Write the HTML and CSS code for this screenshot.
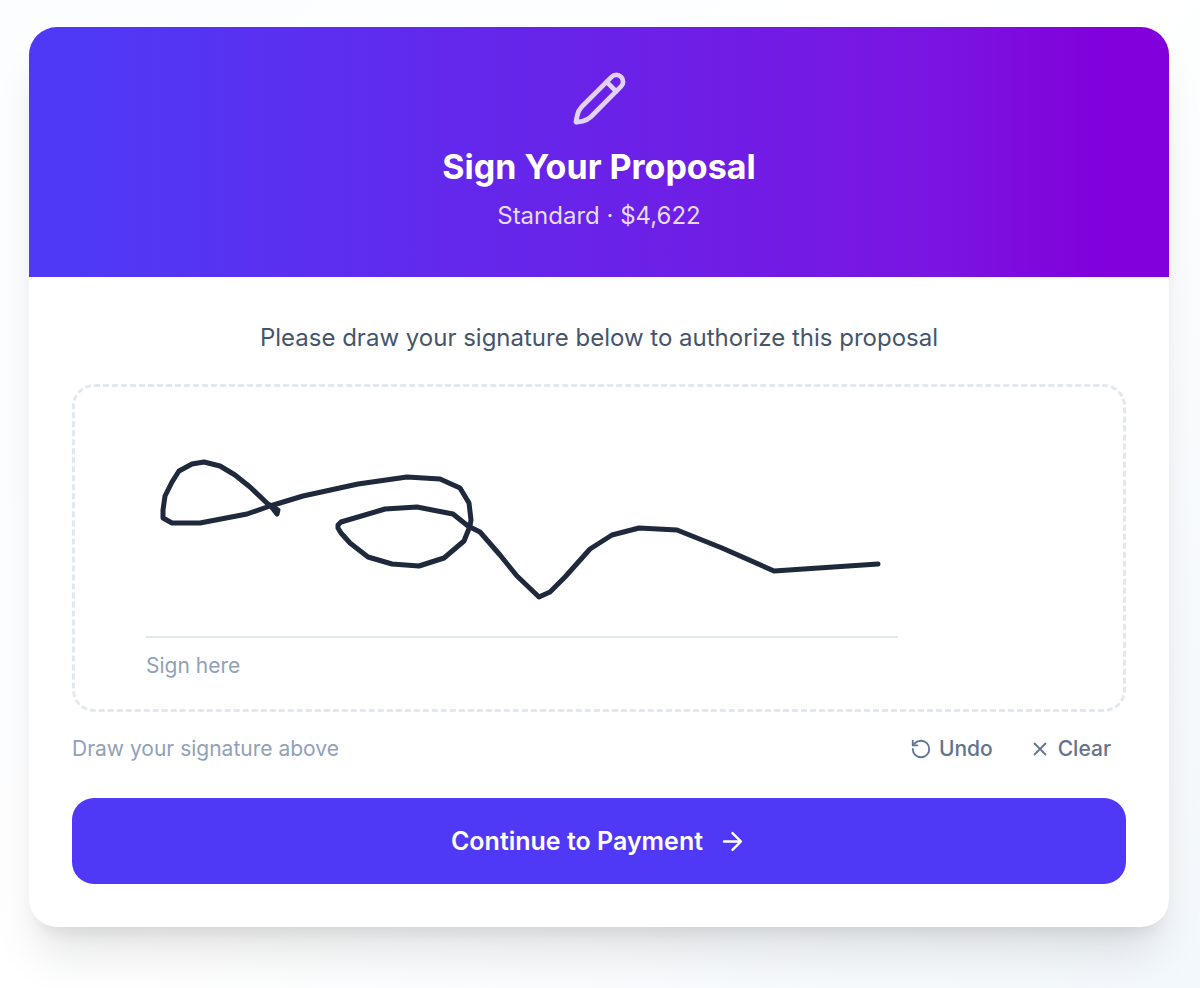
FILE: index.html
```html
<!DOCTYPE html>
<html lang="en">
<head>
    <meta charset="UTF-8">
    <meta name="viewport" content="width=device-width, initial-scale=1.0">
    <title>Sign Your Proposal</title>
    <link rel="stylesheet" href="styles.css">
</head>
<body>
    <main class="card">
        <header class="card-header">
            <svg class="header-icon" viewBox="0 0 24 24" aria-hidden="true">
                <path d="M17.1 2.9a2.8 2.8 0 0 1 4 4L8.4 19.7q-1.500 1.400-3.400 1.800L2.300 22q-.300 0-.200-.400L2.700 18.900q.400-1.900 1.700-3.300z"/>
                <path d="M15 5l4 4"/>
            </svg>
            <h1>Sign Your Proposal</h1>
            <p class="plan">Standard · $4,622</p>
        </header>

        <section class="card-body">
            <p class="intro">Please draw your signature below to authorize this proposal</p>

            <div class="pad">
                <svg class="ink" viewBox="75 387 1048 322" role="img" aria-label="Signature">
                    <polyline points="277,514 278,510 270,505 277,514"/>
                    <polyline points="270,506 250,487 235,475 220,466 204,462 192,464 179,471 172,482 165,496 163,510 163,518 172,523 200,523 247,514 270,506 303,496 358,484 407,477 440,479 460,488 469,503 471,520 470,526 464,541 444,558 419,566 392,564 368,557 350,543 341,533 338,528 338,525 341,522 385,509 417,507 453,514 468,526 480,532 500,555 517,576 539,597 550,592 565,577 590,549 612,535 639,528 677,530 722,548 774,571 878,564"/>
                </svg>
                <p class="guide">Sign here</p>
            </div>

            <div class="tools">
                <span class="hint">Draw your signature above</span>
                <div class="tool-buttons">
                    <button type="button" class="tool">
                        <svg class="tool-icon" viewBox="0 0 24 24" aria-hidden="true">
                            <path d="M3 12a9 9 0 1 0 9-9 9.75 9.75 0 0 0-6.740 2.740L3 8"/>
                            <path d="M3 3v5h5"/>
                        </svg>
                        Undo
                    </button>
                    <button type="button" class="tool">
                        <svg class="tool-icon" viewBox="0 0 24 24" aria-hidden="true">
                            <path d="M18 6L6 18M6 6l12 12"/>
                        </svg>
                        Clear
                    </button>
                </div>
            </div>

            <button type="button" class="continue">
                Continue to Payment
                <svg class="continue-icon" viewBox="0 0 24 24" aria-hidden="true">
                    <path d="M5 12h14M12 5l7 7-7 7"/>
                </svg>
            </button>
        </section>
    </main>
</body>
</html>
```

FILE: styles.css
```css
* {
    margin: 0;
    padding: 0;
    box-sizing: border-box;
}

body {
    min-height: 100vh;
    padding: 27px 31px 60px 29px;
    font-family: Inter, 'Liberation Sans', sans-serif;
    background: linear-gradient(135deg, #fbfdff 0%, #ffffff 50%, #f3f8fc 100%);
}

svg {
    fill: none;
    stroke: currentColor;
    stroke-linecap: round;
    stroke-linejoin: round;
}

button {
    border: none;
    background: none;
    font-family: inherit;
    cursor: pointer;
}

.card {
    background-color: #ffffff;
    border-radius: 28px;
    overflow: hidden;
    box-shadow: 0 36px 45px -9px rgba(0, 0, 0, 0.1), 0 14px 18px -11px rgba(0, 0, 0, 0.1);
}

.card-header {
    display: flex;
    flex-direction: column;
    align-items: center;
    padding: 43px;
    color: #ffffff;
    background: linear-gradient(to right, #4f39f6 4%, #6a22e8 50%, #7a15e0 80%, #8200db 94%);
}

.header-icon {
    width: 57px;
    height: 57px;
    margin-bottom: 18px;
    stroke-width: 2;
    opacity: 0.8;
}

.card-header h1 {
    font-size: 34px;
    line-height: 44px;
    font-weight: 700;
}

.plan {
    margin-top: 9px;
    font-size: 24px;
    line-height: 36px;
    color: #e4dbff;
}

.card-body {
    padding: 43px;
}

.intro {
    margin-bottom: 28px;
    font-size: 24px;
    line-height: 36px;
    text-align: center;
    color: #45556c;
}

.pad {
    position: relative;
    height: 328px;
    padding: 249px 71px 0;
    border: 3px dashed #e2e8f0;
    border-radius: 22px;
}

.ink {
    position: absolute;
    top: 0;
    left: 0;
    width: 100%;
    height: 100%;
    color: #1e293b;
    stroke-width: 5;
}

.guide {
    max-width: 752px;
    padding-top: 13px;
    border-top: 2px solid #e2e8f0;
    font-size: 21px;
    line-height: 30px;
    color: #90a1b9;
}

.tools {
    display: flex;
    justify-content: space-between;
    align-items: center;
    margin: 15px 0 27px;
    font-size: 21px;
    line-height: 30px;
}

.hint {
    color: #90a1b9;
}

.tool-buttons {
    display: flex;
    gap: 6px;
}

.tool {
    display: flex;
    align-items: center;
    gap: 7px;
    padding: 7px 15px;
    font-size: 21px;
    line-height: 30px;
    font-weight: 500;
    color: #62748e;
}

.tool-icon {
    width: 22px;
    height: 22px;
    stroke-width: 2;
}

.continue {
    display: flex;
    justify-content: center;
    align-items: center;
    gap: 15px;
    width: 100%;
    padding: 25px;
    border-radius: 22px;
    font-size: 25px;
    line-height: 36px;
    font-weight: 600;
    color: #ffffff;
    background-color: #4f39f6;
}

.continue-icon {
    width: 29px;
    height: 29px;
    stroke-width: 2;
}
```
